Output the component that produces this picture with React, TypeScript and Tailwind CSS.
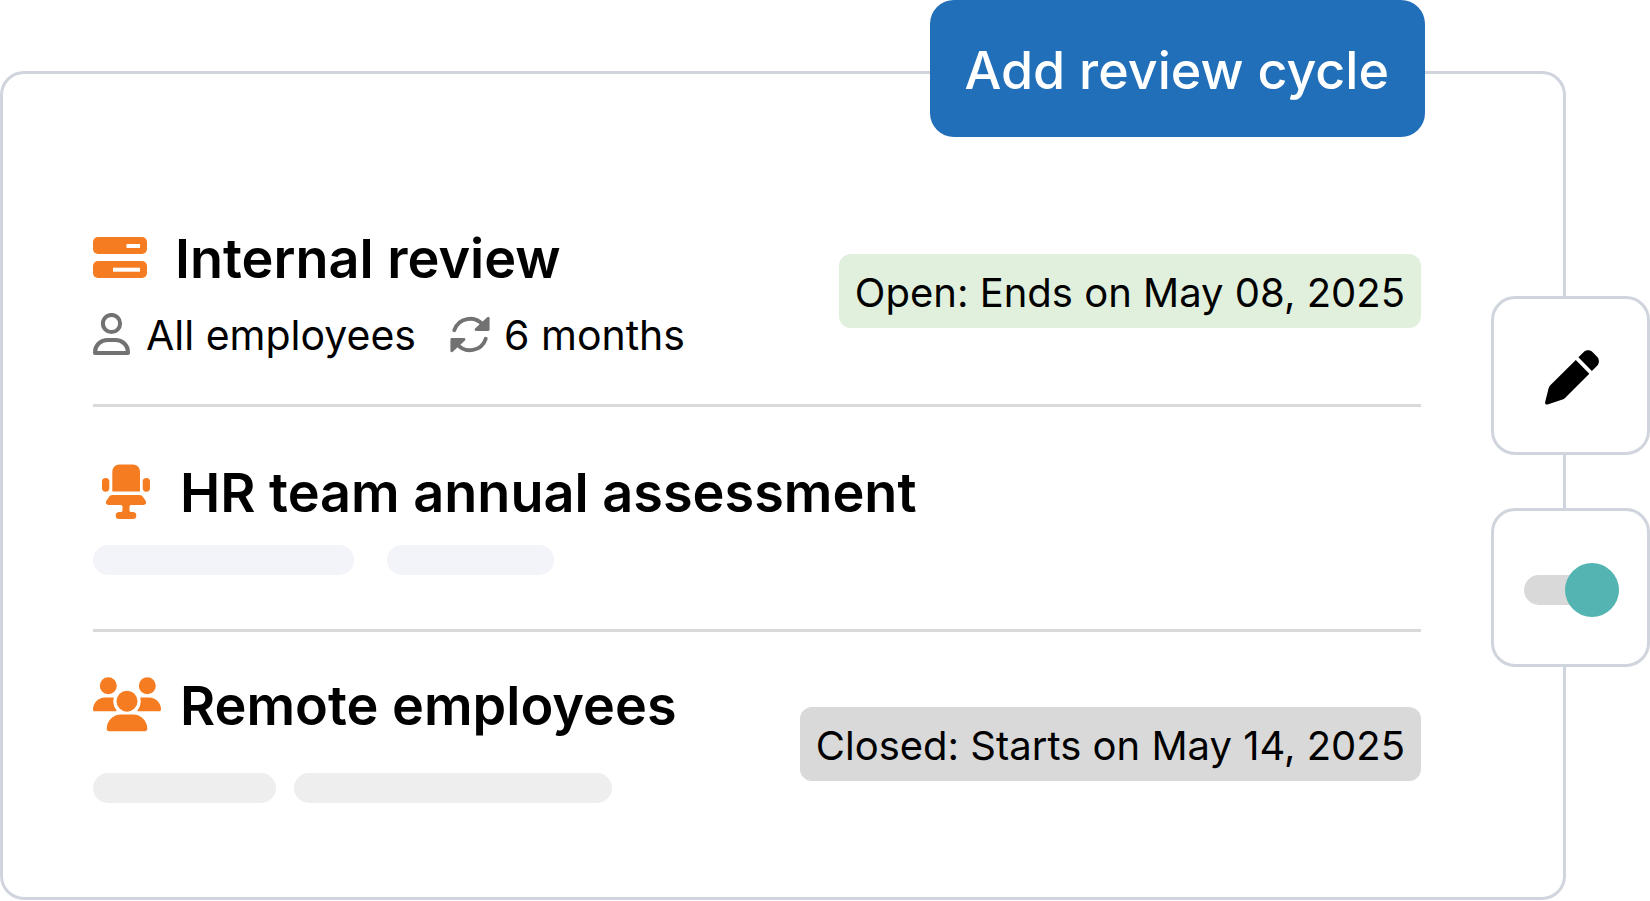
import { useState } from "react";
import type { ReactNode } from "react";

function ServerIcon() {
  return (
    <svg aria-hidden="true" className="shrink-0" width="54" height="41" viewBox="0 0 54 41">
      <rect width="54" height="17" rx="5" fill="#f67c21" />
      <rect y="24" width="54" height="17" rx="5" fill="#f67c21" />
      <rect x="33.5" y="7" width="13.5" height="4" fill="#fff" />
      <rect x="20" y="30.7" width="27" height="4" fill="#fff" />
    </svg>
  );
}

function ChairIcon() {
  return (
    <svg aria-hidden="true" className="shrink-0" width="48" height="55" viewBox="0 0 48 55" fill="#f67c21">
      <path d="M10.3 27.5V8C10.3 3.5 13.3.5 17.5.5h13.3C35 .5 38 3.5 38 8v19.5z" />
      <rect y="14" width="7.3" height="13.7" rx="3.6" />
      <rect x="40.7" y="14" width="7.3" height="13.7" rx="3.6" />
      <path d="M10.5 31h27c1.6 0 2.8.7 3.6 2.1l2.6 4c1.2 2-.2 4-2.5 4H29.5c-1.7 0-2 .8-2 2V46c0 1.4.6 2 2 2h1.300a3.500 3.500 0 0 1 0 7H17.200a3.500 3.500 0 0 1 0-7h1.300c1.400 0 2-.6 2-2v-2.900c0-1.200-.3-2-2-2H6.800c-2.300 0-3.700-2-2.500-4l2.600-4C7.700 31.700 8.900 31 10.500 31z" />
    </svg>
  );
}

function UsersIcon() {
  return (
    <svg aria-hidden="true" className="shrink-0" width="68" height="55" viewBox="0 0 68 55" fill="#f67c21">
      <circle cx="15.300" cy="8.700" r="8.500" />
      <circle cx="54.300" cy="8.700" r="8.500" />
      <path d="M1.800 34.300C.7 34.300 0 33.600 0 32.500 0 25.600 5.400 20.500 12 20.500h7.500c1.500 0 2.800.2 4 .7V34.300z" />
      <path d="M66.200 34.300c1.100 0 1.800-.7 1.800-1.800 0-6.900-5.400-12-12-12h-7.500c-1.500 0-2.800.2-4 .7V34.300z" />
      <circle cx="34" cy="24.200" r="13.700" fill="#fff" />
      <circle cx="34" cy="24.200" r="10.500" />
      <path d="M28 37.500h12c8 0 14.300 6.300 14.300 14.300 0 1.500-.9 2.400-2.300 2.400H16c-1.400 0-2.300-.9-2.300-2.400 0-8 6.300-14.300 14.300-14.300z" />
    </svg>
  );
}

function PersonIcon() {
  return (
    <svg aria-hidden="true" className="mb-0.5 shrink-0" width="37" height="42" viewBox="0 0 37 42" fill="none" stroke="#727272" strokeWidth="4" strokeLinejoin="round">
      <circle cx="18.500" cy="10.500" r="8.600" />
      <path d="M14.500 27h8C29.500 27 35 32.400 35 39.200V40H2v-.8C2 32.400 7.500 27 14.500 27z" />
    </svg>
  );
}

function CycleIcon() {
  return (
    <svg aria-hidden="true" className="mb-0.5 shrink-0" width="40" height="37" viewBox="0 0 40 37" fill="none" stroke="#727272" strokeLinecap="round" strokeLinejoin="round">
      <path d="M4.300 14.200A16.600 16.600 0 0 1 33 9" strokeWidth="3.800" />
      <path d="M38.200 2.200v11.300H26z" fill="#727272" strokeWidth="2.800" />
      <path d="M35.700 22.800A16.600 16.600 0 0 1 7 28" strokeWidth="3.800" />
      <path d="M1.800 34.800V23.500H14z" fill="#727272" strokeWidth="2.800" />
    </svg>
  );
}

function PencilIcon() {
  return (
    <svg aria-hidden="true" width="54" height="55" viewBox="0 0 54 55" fill="#000">
      <path d="M30.800 10 44.300 23.700 20 47.900c-.7.8-1.500 1.400-2.500 1.700L2.500 54.400C1 54.800-.2 53.800.1 52.200L3.600 38.300c.3-1.200.8-2.200 1.700-3.100z" />
      <path d="M33.400 7.300 38.500 2.200c2.700-2.600 6.500-2.600 9.200 0l4.200 4.200c2.700 2.700 2.700 6.900 0 9.600L46.900 21z" />
    </svg>
  );
}

function Heading({ icon, iconClass, children }: { icon: ReactNode; iconClass: string; children: ReactNode }) {
  return (
    <div className="flex h-16 items-center">
      <span className={`mb-1 ${iconClass}`}>{icon}</span>
      <h2 className="whitespace-nowrap text-[54px] leading-[64px] font-semibold">{children}</h2>
    </div>
  );
}

function Badge({ className, children }: { className: string; children: ReactNode }) {
  return (
    <span className={`flex h-[74px] items-center rounded-xl px-4 pt-1 text-[40px] leading-none whitespace-nowrap ${className}`}>
      {children}
    </span>
  );
}

export default function App() {
  const [active, setActive] = useState(true);

  return (
    <main className="relative bg-white pt-[71px] pr-[84px] font-['Inter','Noto_Sans',sans-serif] text-black">
      <section aria-label="Review cycles" className="rounded-3xl border-3 border-[#d0d4dd] pt-[153px] pr-[142px] pb-[94px] pl-[90px]">
        <article className="flex items-start justify-between border-b-3 border-[#d9d9d9] pb-[41px]">
          <div>
            <Heading icon={<ServerIcon />} iconClass="mr-7">Internal review</Heading>
            <div className="mt-4 flex h-14 items-center text-[41px] leading-none whitespace-nowrap">
              <PersonIcon />
              <span className="mr-[34px] ml-4">All employees</span>
              <CycleIcon />
              <span className="ml-3.5">6 months</span>
            </div>
          </div>
          <Badge className="mt-[27px] bg-[#e0f0dd]">Open: Ends on May 08, 2025</Badge>
        </article>

        <article className="border-b-3 border-[#d9d9d9] pt-[54px] pb-[54px]">
          <Heading icon={<ChairIcon />} iconClass="mr-[30px] ml-[9px]">HR team annual assessment</Heading>
          <div className="mt-5 flex gap-[33px]">
            <div className="h-[30px] w-[261px] rounded-full bg-[#f3f4fa]" />
            <div className="h-[30px] w-[167px] rounded-full bg-[#f3f4fa]" />
          </div>
        </article>

        <article className="flex items-start justify-between pt-[42px]">
          <div>
            <Heading icon={<UsersIcon />} iconClass="mr-[19px]">Remote employees</Heading>
            <div className="mt-[35px] flex gap-[18px]">
              <div className="h-[30px] w-[183px] rounded-full bg-[#eeeeee]" />
              <div className="h-[30px] w-[318px] rounded-full bg-[#eeeeee]" />
            </div>
          </div>
          <Badge className="mt-[33px] bg-[#d9d9d9]">Closed: Starts on May 14, 2025</Badge>
        </article>
      </section>

      <button type="button" className="absolute top-0 right-[225px] flex h-[137px] items-center rounded-3xl bg-[#226fb9] pr-9 pl-[34px] pt-1 text-[52px] leading-none font-medium whitespace-nowrap text-white">
        Add review cycle
      </button>

      <div className="absolute top-[296px] right-0 flex flex-col gap-[53px]">
        <button type="button" aria-label="Edit" className="flex size-[159px] items-center justify-center rounded-3xl border-3 border-[#d0d4dd] bg-white pt-1 pl-0.5">
          <PencilIcon />
        </button>
        <label className="flex size-[159px] cursor-pointer items-center justify-center rounded-3xl border-3 border-[#d0d4dd] bg-white pt-1 pl-0.5">
          <input
            type="checkbox"
            role="switch"
            aria-label="Active"
            checked={active}
            onChange={(event) => setActive(event.target.checked)}
            className="peer sr-only"
          />
          <span className="flex h-[30px] w-[95px] items-center rounded-full bg-[#d9d9d9] peer-checked:justify-end">
            <span className="size-[54px] rounded-full bg-[#54b4b1]" />
          </span>
        </label>
      </div>
    </main>
  );
}
